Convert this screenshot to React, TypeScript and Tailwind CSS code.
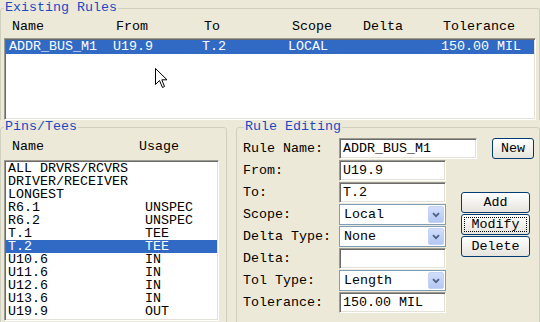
import React from 'react';

const groupCls =
  'm-0 min-w-0 border border-[#D0D0BF] rounded-[3px] px-[3px] pb-0 pt-0';
const legendCls = 'ml-0 px-[1px] leading-[14px] text-[#2149C4]';
const sunken =
  'border border-t-[#9c9a91] border-l-[#9c9a91] border-b-white border-r-white shadow-[inset_1px_1px_0_#6a6a6a,inset_-1px_-1px_0_#e4e2d6] bg-white';

const pins: [string, string][] = [
  ['ALL DRVRS/RCVRS', ''],
  ['DRIVER/RECEIVER', ''],
  ['LONGEST', ''],
  ['R6.1', 'UNSPEC'],
  ['R6.2', 'UNSPEC'],
  ['T.1', 'TEE'],
  ['T.2', 'TEE'],
  ['U10.6', 'IN'],
  ['U11.6', 'IN'],
  ['U12.6', 'IN'],
  ['U13.6', 'IN'],
  ['U19.9', 'OUT'],
];

const TextBox = ({ value, w }: { value: string; w: string }) => (
  <div className={`${sunken} ${w} h-[21px] pl-[3px] leading-[19px] whitespace-pre`}>
    {value}
  </div>
);

const Combo = ({ value }: { value: string }) => (
  <div className="flex h-[21px] w-[107px] items-center border border-[#7F9DB9] bg-white pl-[4px] pr-[1px]">
    <span className="flex-1 leading-[19px]">{value}</span>
    <div className="flex h-[17px] w-[16px] items-center justify-center rounded-[2px] border border-[#C3D3F8] bg-gradient-to-b from-[#D2DEFB] to-[#B3C7F3]">
      <svg width="8" height="6" viewBox="0 0 8 6">
        <path d="M1 1.2 L4 4.2 L7 1.2" fill="none" stroke="#4D6185" strokeWidth="1.8" />
      </svg>
    </div>
  </div>
);

const Btn = ({ label, w, focus }: { label: string; w: string; focus?: boolean }) => (
  <div
    className={`${w} flex h-[21px] items-center justify-center rounded-[3px] border border-[#003C74] bg-gradient-to-b from-white to-[#E6E4DC] p-[2px]`}
  >
    <div
      className={`flex h-full w-full items-center justify-center leading-[14px] ${
        focus ? 'border border-dotted border-black' : ''
      }`}
    >
      {label}
    </div>
  </div>
);

const Row = ({ label, children }: { label: string; children: React.ReactNode }) => (
  <div className="flex h-[21px] items-center">
    <span className="w-[96px] leading-[14px]">{label}</span>
    {children}
  </div>
);

export default function App() {
  return (
    <div className="relative h-[322px] w-[540px] overflow-hidden bg-[#ECE9D8] font-['Liberation_Mono',monospace] text-[13.33px] text-black">
      <fieldset className={`${groupCls} mt-[1px] h-[119px] rounded-b-none border-b-0`}>
        <legend className={legendCls}>Existing Rules</legend>
        <div className="flex h-[23px] pl-[8px] pt-[5px] leading-[14px]">
          <span className="w-[104px]">Name</span>
          <span className="w-[88px]">From</span>
          <span className="w-[88px]">To</span>
          <span className="w-[71px]">Scope</span>
          <span className="w-[80px]">Delta</span>
          <span>Tolerance</span>
        </div>
        <div className={`${sunken} h-[82px] p-[1px]`}>
          <div className="flex h-[14px] bg-[#316AC5] pl-[3px] leading-[14px] whitespace-pre text-white">
            <span className="w-[104px]">ADDR_BUS_M1</span>
            <span className="w-[89px]">U19.9</span>
            <span className="w-[86px]">T.2</span>
            <span className="w-[72px]">LOCAL</span>
            <span className="w-[81px]"></span>
            <span>150.00 MIL</span>
          </div>
        </div>
      </fieldset>

      <div className="flex">
        <fieldset className={`${groupCls} h-[215px] w-[227px]`}>
          <legend className={legendCls}>Pins/Tees</legend>
          <div className="flex h-[26px] pl-[8px] pt-[6px] leading-[14px]">
            <span className="w-[127px]">Name</span>
            <span>Usage</span>
          </div>
          <div className={`${sunken} h-[161px] w-[215px] p-[1px]`}>
            {pins.map(([name, usage]) => (
              <div
                key={name}
                className={`flex h-[13px] pl-[2px] leading-[13px] whitespace-pre ${
                  name === 'T.2' ? 'bg-[#316AC5] text-white' : ''
                }`}
              >
                <span className="w-[137px]">{name}</span>
                <span>{usage}</span>
              </div>
            ))}
          </div>
        </fieldset>

        <fieldset className={`${groupCls} ml-[9px] h-[215px] w-[304px]`}>
          <legend className={`${legendCls} ml-[4px]`}>Rule Editing</legend>
          <div className="mt-[4px] pl-[3px]">
            <div className="flex items-center">
              <Row label="Rule Name:">
                <TextBox value="ADDR_BUS_M1" w="w-[138px]" />
              </Row>
              <div className="ml-[15px]">
                <Btn label="New" w="w-[42px]" />
              </div>
            </div>
            <div className="mt-[1px] flex">
              <div className="flex flex-col gap-[1px]">
                <Row label="From:">
                  <TextBox value="U19.9" w="w-[107px]" />
                </Row>
                <Row label="To:">
                  <TextBox value="T.2" w="w-[107px]" />
                </Row>
                <Row label="Scope:">
                  <Combo value="Local" />
                </Row>
                <Row label="Delta Type:">
                  <Combo value="None" />
                </Row>
                <Row label="Delta:">
                  <TextBox value="" w="w-[107px]" />
                </Row>
                <Row label="Tol Type:">
                  <Combo value="Length" />
                </Row>
                <Row label="Tolerance:">
                  <TextBox value="150.00 MIL" w="w-[107px]" />
                </Row>
              </div>
              <div className="ml-[15px] mt-[32px] flex flex-col gap-[1px]">
                <Btn label="Add" w="w-[69px]" />
                <Btn label="Modify" w="w-[69px]" focus />
                <Btn label="Delete" w="w-[69px]" />
              </div>
            </div>
          </div>
        </fieldset>
      </div>

      <svg
        className="absolute left-[155px] top-[68px]"
        width="13"
        height="21"
        viewBox="0 0 13 21"
      >
        <path
          d="M0.5 0.5 L0.5 16.5 L4.5 12.5 L7.5 19.5 L9.5 18.5 L6.8 11.8 L12 11.8 Z"
          fill="white"
          stroke="black"
          strokeWidth="1"
        />
      </svg>
    </div>
  );
}
